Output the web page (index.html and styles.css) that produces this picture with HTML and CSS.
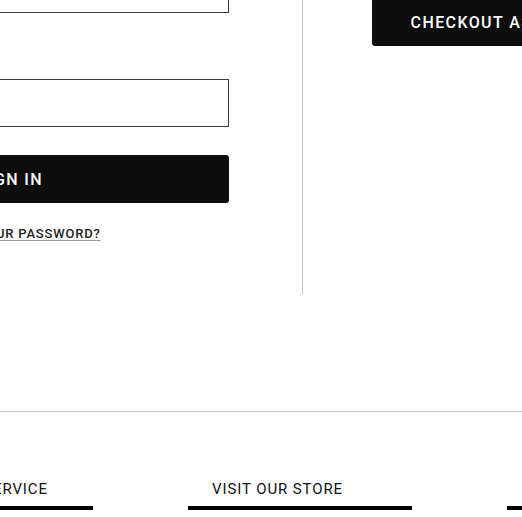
FILE: index.html
```html
<!DOCTYPE html>
<html lang="en">
<head>
<meta charset="utf-8">
<title>Sign in</title>
<link rel="stylesheet" href="styles.css">
</head>
<body>
<div class="page">
  <main class="account">
    <section class="login">
      <div class="field">
        <input class="input" type="email" aria-label="Email">
      </div>
      <div class="field">
        <label class="label">PASSWORD</label>
        <input class="input" type="password" aria-label="Password">
      </div>
      <button class="btn btn-signin">SIGN IN</button>
      <a class="forgot" href="#">FORGOT YOUR PASSWORD?</a>
    </section>
    <section class="guest">
      <button class="btn btn-guest">CHECKOUT AS GUEST</button>
    </section>
  </main>
  <footer class="footer">
    <div class="footer-col"><h3 class="footer-title">CUSTOMER SERVICE</h3></div>
    <div class="footer-col"><h3 class="footer-title">VISIT OUR STORE</h3></div>
    <div class="footer-col"><h3 class="footer-title">FOLLOW US</h3></div>
  </footer>
</div>
</body>
</html>
```
FILE: styles.css
```css
html, body {
  margin: 0;
  padding: 0;
  background: #fff;
  overflow: hidden;
}
body {
  font-family: Roboto, "Liberation Sans", Arial, sans-serif;
  color: #111;
}
.page {
  margin: -35px 0 0 -209px;
  width: 1100px;
}
.account {
  display: flex;
  align-items: flex-start;
}
.login {
  width: 438px;
  padding-right: 73px;
  padding-bottom: 52px;
  border-right: 1px solid #c4c4c4;
  display: flex;
  flex-direction: column;
}
.field {
  display: flex;
  flex-direction: column;
}
.label {
  margin: 32px 0 16px;
  font-size: 13px;
  line-height: 18px;
  letter-spacing: 1px;
}
.input {
  box-sizing: border-box;
  height: 48px;
  width: 100%;
  border: 1px solid #3c3c3c;
  border-radius: 0;
  background: #fff;
  margin: 0;
  padding: 0 14px;
}
.btn {
  box-sizing: border-box;
  height: 48px;
  border: none;
  border-radius: 3px;
  background: #0d0d0d;
  color: #fff;
  font-family: Roboto, "Liberation Sans", Arial, sans-serif;
  font-size: 16px;
  font-weight: 500;
  letter-spacing: 1.4px;
  padding: 0;
}
.btn-signin {
  width: 100%;
  margin-top: 28px;
}
.forgot {
  align-self: center;
  margin-top: 22px;
  font-size: 13px;
  line-height: 17px;
  font-weight: 500;
  letter-spacing: 0.8px;
  color: #222;
  text-decoration: underline;
  text-decoration-color: #9a9a9a;
  text-underline-offset: 2px;
}
.guest {
  padding-left: 69px;
  padding-top: 33px;
}
.btn-guest {
  width: 261px;
}
.footer {
  margin-top: 117px;
  border-top: 1px solid #c8c8c8;
  padding: 67px 0 0 78px;
  display: flex;
  gap: 95px;
}
.footer-col {
  width: 224px;
  flex: 0 0 224px;
}
.footer-title {
  margin: 0;
  padding: 0 0 7px 24px;
  font-size: 15px;
  line-height: 20px;
  font-weight: 400;
  letter-spacing: 0.9px;
  color: #111;
  border-bottom: 4px solid #000;
}
```
